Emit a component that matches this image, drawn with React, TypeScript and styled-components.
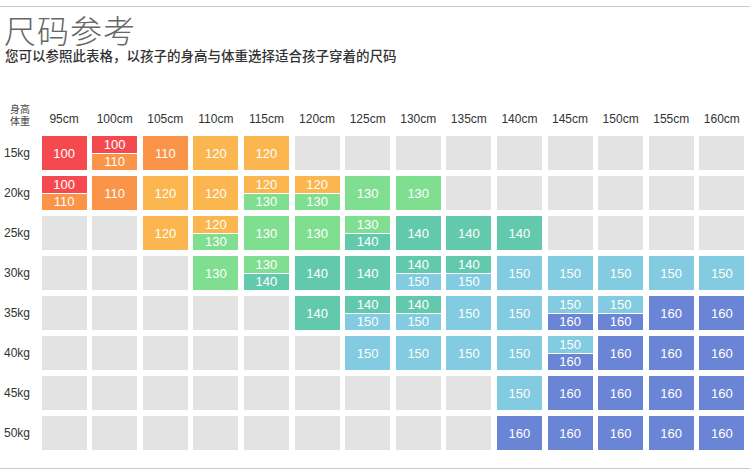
import React from "react";
import styled, { createGlobalStyle } from "styled-components";

const G = createGlobalStyle`
  body { margin:0; background:#fff; font-family:"Noto Sans CJK SC","Noto Sans",sans-serif; }
`;
const C: Record<string,string> = { "100":"#f44a4f","110":"#fa9448","120":"#fbb64f","130":"#80de91","140":"#62c9ad","150":"#82cbe0","160":"#6b85d6" };
const rows: [string,string[]][] = [
  ["15kg",["100","100/110","110","120","120","","","","","","","","",""]],
  ["20kg",["100/110","110","120","120","120/130","120/130","130","130","","","","","",""]],
  ["25kg",["","","120","120/130","130","130","130/140","140","140","140","","","",""]],
  ["30kg",["","","","130","130/140","140","140","140/150","140/150","150","150","150","150","150"]],
  ["35kg",["","","","","","140","140/150","140/150","150","150","150/160","150/160","160","160"]],
  ["40kg",["","","","","","","150","150","150","150","150/160","160","160","160"]],
  ["45kg",["","","","","","","","","","150","160","160","160","160"]],
  ["50kg",["","","","","","","","","","160","160","160","160","160"]],
];
const heights = ["95cm","100cm","105cm","110cm","115cm","120cm","125cm","130cm","135cm","140cm","145cm","150cm","155cm","160cm"];

const Page = styled.div`width:750px;height:463px;box-sizing:border-box;border-top:1px solid #ccc;margin-top:6px;position:relative;`;
const Title = styled.div`font-size:32px;font-weight:200;color:#666;padding:3px 0 0 4px;line-height:38px;letter-spacing:1px;`;
const Sub = styled.div`font-size:13.5px;color:#333;padding-left:5px;line-height:20px;font-weight:500;margin-top:-3px;`;
const Grid = styled.div`display:grid;grid-template-columns:32px repeat(14,45px);column-gap:5.6px;row-gap:6px;padding:38px 0 0 4px;`;
const Corner = styled.div`font-size:10px;line-height:12px;color:#444;text-align:center;align-self:end;margin-bottom:3px;`;
const Head = styled.div`font-family:"Liberation Sans",sans-serif;font-size:12px;color:#333;text-align:center;align-self:end;line-height:14px;margin-bottom:4px;`;
const Label = styled.div`font-family:"Liberation Sans",sans-serif;font-size:12px;color:#333;display:flex;align-items:center;height:34px;`;
const Cell = styled.div<{ $bg:string }>`height:34px;background:${p=>p.$bg};color:#fff;display:flex;align-items:center;justify-content:center;font-family:"Liberation Sans",sans-serif;font-size:13px;`;
const Split = styled.div`height:34px;display:flex;flex-direction:column;gap:1px;`;
const Half = styled.div<{ $bg:string }>`flex:1;background:${p=>p.$bg};color:#fff;display:flex;align-items:center;justify-content:center;font-family:"Liberation Sans",sans-serif;font-size:13px;line-height:1;`;
const Bottom = styled.div`position:absolute;left:0;right:0;bottom:0;border-top:1px solid #ccc;`;

export default function App(){
  return <><G/><Page>
    <Title>尺码参考</Title>
    <Sub>您可以参照此表格，以孩子的身高与体重选择适合孩子穿着的尺码</Sub>
    <Grid>
      <Corner>身高<br/>体重</Corner>
      {heights.map(h=><Head key={h}>{h}</Head>)}
      {rows.map(([w,cells])=><React.Fragment key={w}>
        <Label>{w}</Label>
        {cells.map((c,i)=>{
          if(!c) return <Cell key={i} $bg="#e3e3e3"/>;
          if(c.includes("/")){const [a,b]=c.split("/");return <Split key={i}><Half $bg={C[a]}>{a}</Half><Half $bg={C[b]}>{b}</Half></Split>;}
          return <Cell key={i} $bg={C[c]}>{c}</Cell>;
        })}
      </React.Fragment>)}
    </Grid>
    <Bottom/>
  </Page></>;
}
